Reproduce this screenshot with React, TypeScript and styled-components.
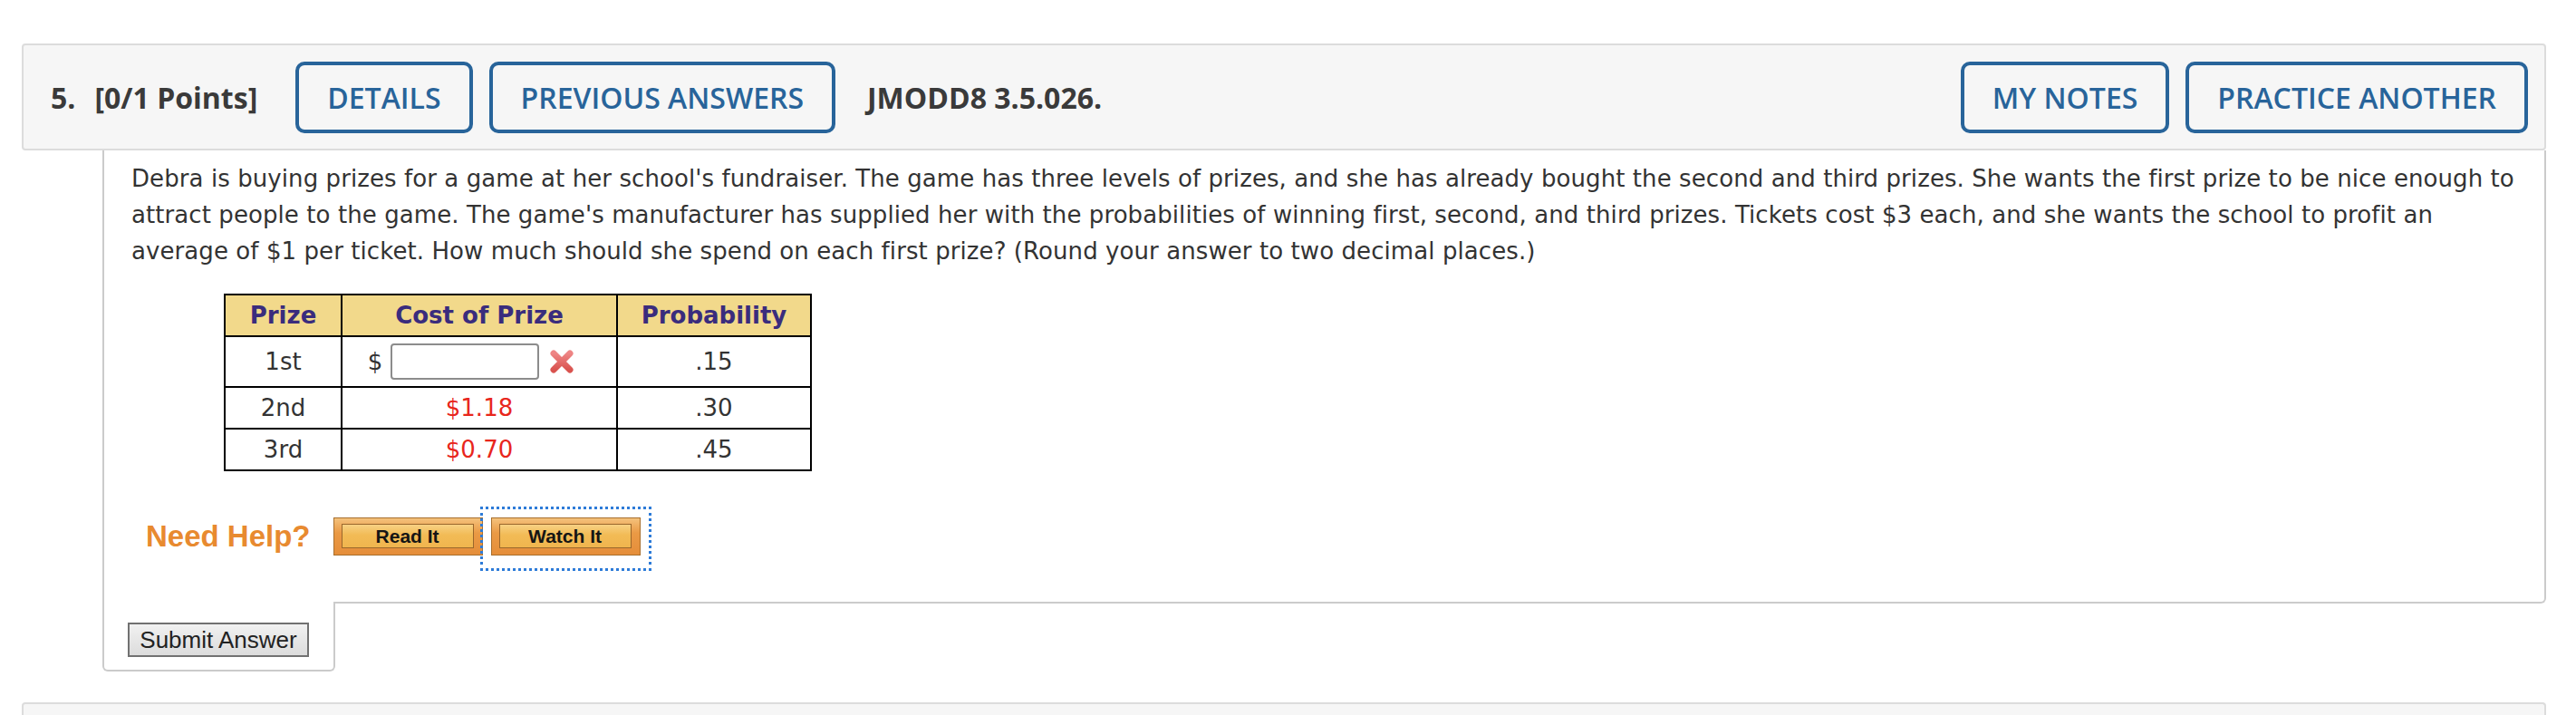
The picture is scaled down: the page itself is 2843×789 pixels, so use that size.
import React from "react";
import styled, { createGlobalStyle } from "styled-components";

const GlobalStyle = createGlobalStyle`
  html, body {
    margin: 0;
    padding: 0;
    background: #ffffff;
    overflow: hidden;
  }
  body {
    font-family: "DejaVu Sans", Verdana, sans-serif;
  }
`;

const Page = styled.div`
  padding: 48px 33px 0 24px;
`;

const Header = styled.div`
  display: flex;
  align-items: center;
  box-sizing: border-box;
  height: 118px;
  padding: 0 18px 0 30px;
  border: 2px solid #dcdcdc;
  border-radius: 4px;
  background: #f6f6f6;
  font-family: "Open Sans", sans-serif;
  color: #3a3a3a;
`;

const HeaderLabel = styled.span<{ $gap: number }>`
  font-size: 32px;
  font-weight: 700;
  margin-right: ${(p) => p.$gap}px;
  white-space: nowrap;
`;

const HeaderButton = styled.button`
  box-sizing: border-box;
  height: 79px;
  padding: 0 31px;
  margin-right: 18px;
  border: 4px solid #28649a;
  border-radius: 10px;
  background: transparent;
  color: #28649a;
  font-family: "Open Sans", sans-serif;
  font-size: 32px;
  font-weight: 600;
  white-space: nowrap;
  cursor: pointer;
  &:last-child {
    margin-right: 0;
  }
`;

const Title = styled.span`
  margin-left: 17px;
  font-size: 32px;
  font-weight: 700;
  white-space: nowrap;
`;

const Spacer = styled.div`
  flex: 1;
`;

const Panel = styled.div`
  margin-left: 89px;
  padding: 11px 20px 51px 30px;
  border: 2px solid #cbcbcb;
  border-top: none;
  border-bottom-right-radius: 6px;
  background: #ffffff;
`;

const QuestionText = styled.p`
  margin: 0;
  font-size: 26px;
  line-height: 40px;
  letter-spacing: 0.08px;
  color: #333333;
`;

const PrizeTable = styled.table`
  margin: 27px 0 0 102px;
  border-collapse: collapse;
  table-layout: fixed;
  width: 647px;
  font-size: 26px;
  color: #333333;
`;

const Row = styled.tr<{ $h: number }>`
  height: ${(p) => p.$h}px;
`;

const HeadCell = styled.th`
  padding: 0;
  border: 2px solid #000000;
  background: #f2d98b;
  color: #3a2c7d;
  font-weight: 700;
  text-align: center;
`;

const Cell = styled.td<{ $red?: boolean }>`
  padding: 0;
  border: 2px solid #000000;
  text-align: center;
  color: ${(p) => (p.$red ? "#e8261c" : "#333333")};
`;

const AnswerWrap = styled.div`
  display: inline-flex;
  align-items: center;
  vertical-align: middle;
  margin-right: 18px;
`;

const Dollar = styled.span`
  margin-right: 9px;
`;

const AnswerInput = styled.input`
  box-sizing: border-box;
  width: 164px;
  height: 40px;
  border: 2px solid #8c8c8c;
  border-radius: 4px;
  background: #ffffff;
  margin: 0 11px 0 0;
  padding: 0 6px;
  font-size: 24px;
`;

const HelpRow = styled.div`
  display: flex;
  align-items: flex-start;
  margin-top: 51px;
  padding-left: 16px;
`;

const NeedHelp = styled.span`
  font-family: "Liberation Sans", Arial, sans-serif;
  font-weight: 700;
  font-size: 33px;
  line-height: 42px;
  color: #e88a30;
  margin-right: 25px;
  white-space: nowrap;
`;

const HelpButton = styled.a`
  box-sizing: border-box;
  display: flex;
  flex-shrink: 0;
  width: 165px;
  height: 42px;
  padding: 6px 9px 7px 8px;
  border: 1px solid #a86f2d;
  background: linear-gradient(#f4c27c, #ea9a45 40%, #e58e3a);
  text-decoration: none;
`;

const HelpInner = styled.span`
  flex: 1;
  display: flex;
  align-items: center;
  justify-content: center;
  border: 1px solid #9a672c;
  background: linear-gradient(#f7d184, #f2bb56 45%, #f0b54e);
  font-family: "Liberation Sans", Arial, sans-serif;
  font-weight: 700;
  font-size: 21px;
  color: #151515;
`;

const HelpItem = styled.span<{ $focused?: boolean }>`
  display: inline-flex;
  flex-shrink: 0;
  margin-right: 9px;
  ${(p) =>
    p.$focused
      ? `
    outline: 3px dotted #2d7bd8;
    outline-offset: 9px;
    padding-bottom: 5px;
    margin-bottom: -5px;
  `
      : ""}
`;

const SubmitTab = styled.div`
  box-sizing: border-box;
  width: 257px;
  margin: -2px 0 0 89px;
  padding: 23px 0 14px 26px;
  border: 2px solid #cbcbcb;
  border-top: none;
  border-radius: 0 0 6px 6px;
  background: #ffffff;
`;

const SubmitButton = styled.button`
  box-sizing: border-box;
  display: block;
  width: 200px;
  height: 38px;
  padding: 0;
  border: 2px solid #717171;
  background: linear-gradient(#f1f1f1, #dcdcdc);
  font-family: "Liberation Sans", Arial, sans-serif;
  font-size: 26px;
  color: #222222;
  cursor: pointer;
`;

const NextPanel = styled.div`
  margin-top: 34px;
  height: 14px;
  border: 2px solid #dcdcdc;
  border-bottom: none;
  border-radius: 4px 4px 0 0;
  background: #f6f6f6;
`;

const WrongMark = () => (
  <svg width="28" height="26" viewBox="0 0 28 26" aria-label="incorrect">
    <defs>
      <linearGradient id="xg" x1="0" y1="0" x2="0" y2="1">
        <stop offset="0" stopColor="#ee8585" />
        <stop offset="1" stopColor="#d9534f" />
      </linearGradient>
    </defs>
    <path
      d="M5 4 L23 22 M23 4 L5 22"
      stroke="url(#xg)"
      strokeWidth="7"
      strokeLinecap="round"
      fill="none"
    />
  </svg>
);

export default function App() {
  return (
    <>
      <GlobalStyle />
      <Page>
        <Header>
          <HeaderLabel $gap={21}>5.</HeaderLabel>
          <HeaderLabel $gap={42}>[0/1 Points]</HeaderLabel>
          <HeaderButton>DETAILS</HeaderButton>
          <HeaderButton>PREVIOUS ANSWERS</HeaderButton>
          <Title>JMODD8 3.5.026.</Title>
          <Spacer />
          <HeaderButton>MY NOTES</HeaderButton>
          <HeaderButton>PRACTICE ANOTHER</HeaderButton>
        </Header>
        <Panel>
          <QuestionText>
            Debra is buying prizes for a game at her school's fundraiser. The
            game has three levels of prizes, and she has already bought the
            second and third prizes. She wants the first prize to be nice enough
            to attract people to the game. The game's manufacturer has supplied
            her with the probabilities of winning first, second, and third
            prizes. Tickets cost $3 each, and she wants the school to profit an
            average of $1 per ticket. How much should she spend on each first
            prize? (Round your answer to two decimal places.)
          </QuestionText>
          <PrizeTable>
            <colgroup>
              <col style={{ width: 129 }} />
              <col style={{ width: 304 }} />
              <col style={{ width: 214 }} />
            </colgroup>
            <thead>
              <Row $h={46}>
                <HeadCell>Prize</HeadCell>
                <HeadCell>Cost of Prize</HeadCell>
                <HeadCell>Probability</HeadCell>
              </Row>
            </thead>
            <tbody>
              <Row $h={56}>
                <Cell>1st</Cell>
                <Cell>
                  <AnswerWrap>
                    <Dollar>$</Dollar>
                    <AnswerInput type="text" aria-label="Cost of first prize" />
                    <WrongMark />
                  </AnswerWrap>
                </Cell>
                <Cell>.15</Cell>
              </Row>
              <Row $h={46}>
                <Cell>2nd</Cell>
                <Cell $red>$1.18</Cell>
                <Cell>.30</Cell>
              </Row>
              <Row $h={46}>
                <Cell>3rd</Cell>
                <Cell $red>$0.70</Cell>
                <Cell>.45</Cell>
              </Row>
            </tbody>
          </PrizeTable>
          <HelpRow>
            <NeedHelp>Need Help?</NeedHelp>
            <HelpItem>
              <HelpButton href="#">
                <HelpInner>Read It</HelpInner>
              </HelpButton>
            </HelpItem>
            <HelpItem $focused>
              <HelpButton href="#">
                <HelpInner>Watch It</HelpInner>
              </HelpButton>
            </HelpItem>
          </HelpRow>
        </Panel>
        <SubmitTab>
          <SubmitButton>Submit Answer</SubmitButton>
        </SubmitTab>
        <NextPanel />
      </Page>
    </>
  );
}
